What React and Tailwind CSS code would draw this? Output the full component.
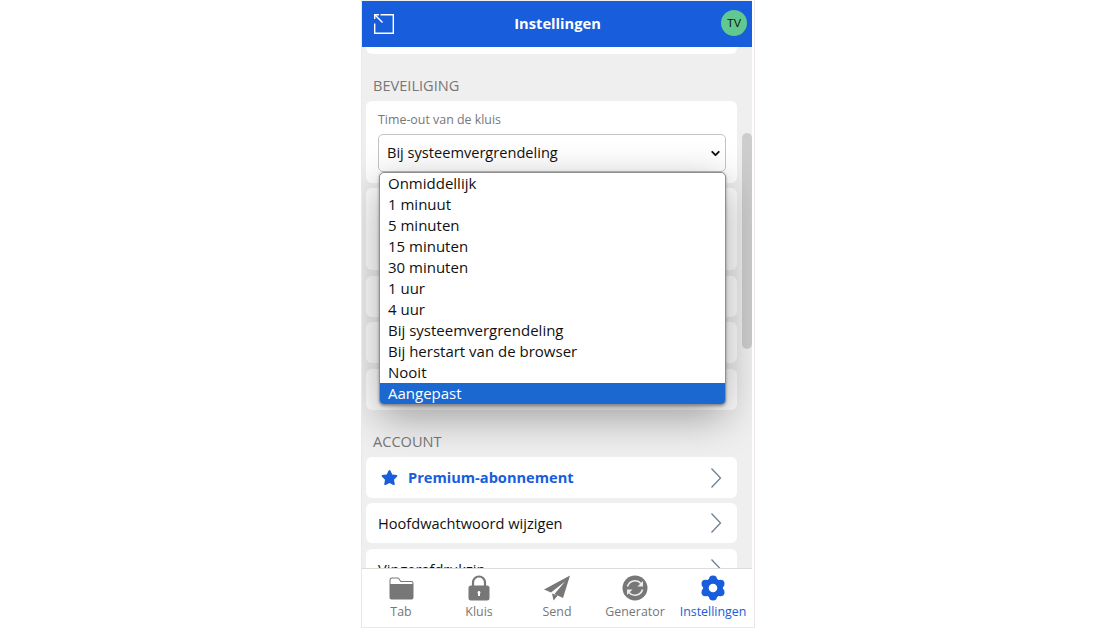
import React from 'react';
import { ChevronDown } from 'lucide-react';
import { FaStar } from 'react-icons/fa';

const timeouts = [
  'Onmiddellijk', '1 minuut', '5 minuten', '15 minuten', '30 minuten', '1 uur', '4 uur',
  'Bij systeemvergrendeling', 'Bij herstart van de browser', 'Nooit',
];

const PopOutIcon = () => (
  <svg width="20" height="20" viewBox="0 0 20 20" fill="none" stroke="white" strokeWidth="1.4">
    <path d="M6.500 0.700h12.800v18.600H0.700V9.500" />
    <path d="M1 1l7.500 7.500" />
    <path d="M0.700 5V0.700H5" />
  </svg>
);

const FolderIcon = () => (
  <svg width="25" height="23" viewBox="0 0 25 23">
    <path d="M0.500 20.500V3Q0.500 0.500 3 0.500h5.500q1.300 0 2 1.200L12 4h10.500q2 0 2 2v14.500q0 2-2 2H2.500q-2 0-2-2z" fill="#777" />
    <path d="M1.500 7V3q0-1.500 1.500-1.500h5.500q.8 0 1.200.7L11.500 5h11q1 0 1 1v1z" fill="#fff" />
  </svg>
);

const LockIcon = () => (
  <svg width="22" height="26" viewBox="0 0 22 26">
    <path d="M5 12V7.500a6 6 0 0 1 12 0V12" fill="none" stroke="#777" strokeWidth="2.200" />
    <path fillRule="evenodd" fill="#777" d="M3 10.500h16q2.500 0 2.500 2.500v10q0 2.500-2.500 2.500H3q-2.500 0-2.500-2.500V13q0-2.500 2.500-2.500zM11 16a1.500 1.500 0 0 0-1 2.600V21h2v-2.400A1.500 1.500 0 0 0 11 16z" />
  </svg>
);

const SendIcon = () => (
  <svg width="26" height="26" viewBox="0 0 26 26">
    <path fill="#777" d="M26 0.500L0 14.500l7 3L21 6.500 10.500 19l8.500 4z" />
    <path fill="#777" d="M8 18.500l1.500 7 4.300-5z" />
  </svg>
);

const GeneratorIcon = () => (
  <svg width="26" height="26" viewBox="0 0 26 26">
    <circle cx="13" cy="13" r="12.500" fill="#777" />
    <path d="M5.500 11.500a7.800 7.800 0 0 1 13.500-3" fill="none" stroke="#eee" strokeWidth="1.600" />
    <path d="M21 6v5.500h-5.500z" fill="#eee" />
    <path d="M20.500 14.500a7.800 7.800 0 0 1-13.500 3" fill="none" stroke="#eee" strokeWidth="1.600" />
    <path d="M5 20v-5.500h5.500z" fill="#eee" />
  </svg>
);

const CogIcon = () => (
  <svg width="26" height="26" viewBox="0 0 26 26" fill="#175ddc">
    <circle cx="13" cy="13" r="10" />
    <circle cx="13" cy="4.500" r="4" />
    <circle cx="20.500" cy="8.700" r="4" />
    <circle cx="20.500" cy="17.300" r="4" />
    <circle cx="13" cy="21.500" r="4" />
    <circle cx="5.500" cy="17.300" r="4" />
    <circle cx="5.500" cy="8.700" r="4" />
    <circle cx="13" cy="13" r="4.300" fill="#fff" />
  </svg>
);

const Chevron = () => (
  <svg width="12" height="22" viewBox="0 0 12 22" fill="none" stroke="#6d7f93" strokeWidth="1.300">
    <path d="M1.500 1.500L10.500 11 1.500 20.500" />
  </svg>
);

const tabs = [
  { label: 'Tab', icon: <FolderIcon /> },
  { label: 'Kluis', icon: <LockIcon /> },
  { label: 'Send', icon: <SendIcon /> },
  { label: 'Generator', icon: <GeneratorIcon /> },
  { label: 'Instellingen', icon: <CogIcon />, active: true },
];

const SectionTitle = ({ children }) => (
  <h2 className="px-[7px] text-[14.6px] leading-[19px] text-[#777] uppercase">{children}</h2>
);

const Row = ({ children, className = 'h-[40px]' }) => (
  <div className={`${className} bg-white rounded-[6px] flex items-center justify-between pl-[12px] pr-[15px]`}>
    {children}
  </div>
);

// settings row under the open list, only the edge of its checkbox shows
const ToggleRow = ({ color, className }) => (
  <div className={`${className} h-[41px] bg-white rounded-[6px] flex items-center justify-end pr-[11px]`}>
    {color && <span className={`w-[13px] h-[11px] rounded-[2px] ${color}`} />}
  </div>
);

export default function App() {
  return (
    <div className="h-[628px] bg-white pl-[361px] overflow-hidden" style={{ fontFamily: '"Open Sans", sans-serif' }}>
      <div className="w-[394px] h-[628px] border-l border-r border-b border-[#ece6ea] bg-white flex flex-col">
        <div className="w-[390px] flex-1 min-h-0 flex flex-col bg-[#efefef]">
          <header className="h-[46px] mt-px shrink-0 bg-[#175ddc] flex items-center justify-between pl-[12px] pr-[5px]">
            <PopOutIcon />
            <span className="text-white font-bold text-[14.7px] mb-[2px]">Instellingen</span>
            <span className="w-[26px] h-[26px] mb-[2px] rounded-full bg-[#5fc98f] text-[#111] text-[11px] flex items-center justify-center" style={{ fontFamily: '"Liberation Sans", sans-serif' }}>
              TV
            </span>
          </header>

          <div className="flex-1 min-h-0 flex overflow-hidden">
            <main className="w-[380px] shrink-0 relative">
              <div className="ml-[4px] w-[371px]">
                <div className="h-[7px] bg-white rounded-b-[6px]" />
                <div className="mt-[22px]"><SectionTitle>Beveiliging</SectionTitle></div>
                <div className="mt-[6px] h-[82px] bg-white rounded-[6px] pl-[12px] pr-[11px] pt-[11px]">
                  <div className="text-[12.4px] leading-[16px] text-[#777]">Time-out van de kluis</div>
                  <div className="mt-[6px] h-[38px] bg-white border border-[#c4c4c4] rounded-[5px] flex items-center justify-between pl-[8px] pr-[3px] text-[14.6px] text-[#111]">
                    <span>Bij systeemvergrendeling</span>
                    <ChevronDown size={13} strokeWidth={3.5} color="#111" />
                  </div>
                </div>
                <div className="mt-[5px] h-[82px] bg-white rounded-[6px]" />
                <ToggleRow className="mt-[6px]" color="bg-[#175ddc]" />
                <ToggleRow className="mt-[5px]" color="bg-[#777]" />
                <ToggleRow className="mt-[6px]" />

                <div className="mt-[22px]"><SectionTitle>Account</SectionTitle></div>
                <div className="mt-[6px] flex flex-col gap-[5px]">
                  <Row className="h-[41px]">
                    <span className="flex items-center gap-[10px] text-[#175ddc] font-bold text-[14.6px]">
                      <FaStar size={17} className="ml-[3px]" />
                      Premium-abonnement
                    </span>
                    <Chevron />
                  </Row>
                  <Row>
                    <span className="text-[14.6px] text-[#111] mt-px">Hoofdwachtwoord wijzigen</span>
                    <Chevron />
                  </Row>
                  <Row className="h-[40px] mt-px">
                    <span className="text-[14.6px] text-[#111] mt-px">Vingerafdrukzin</span>
                    <Chevron />
                  </Row>
                </div>
              </div>

              {/* open native select list, sits on top of the cards */}
              <div className="absolute left-[17px] top-[125px] w-[347px] h-[233px] bg-white border border-[#8f8f8f] rounded-[5px] overflow-hidden shadow-[0_1px_3px_rgba(0,0,0,0.35),0_12px_40px_rgba(0,0,0,0.35)] text-[15px] leading-[21px] text-[#111]">
                {timeouts.map((t) => (
                  <div key={t} className="pl-[8px]">{t}</div>
                ))}
                <div className="pl-[8px] bg-[#1a68d0] text-white">Aangepast</div>
              </div>
            </main>

            <div className="w-[10px] shrink-0">
              <div className="mt-[86px] h-[216px] bg-[#cdcdcd] rounded-[5px]" />
            </div>
          </div>
        </div>

        <nav className="h-[59px] shrink-0 w-[390px] bg-white border-t border-[#dcdcdc] flex">
          {tabs.map((t) => (
            <div key={t.label} className={`flex-1 flex flex-col items-center ${t.active ? 'text-[#175ddc]' : 'text-[#777]'}`}>
              <div className="h-[26px] mt-[6px] flex items-center justify-center">{t.icon}</div>
              <span className="text-[12.4px] leading-[16px] mt-[3px]">{t.label}</span>
            </div>
          ))}
        </nav>
      </div>
    </div>
  );
}
